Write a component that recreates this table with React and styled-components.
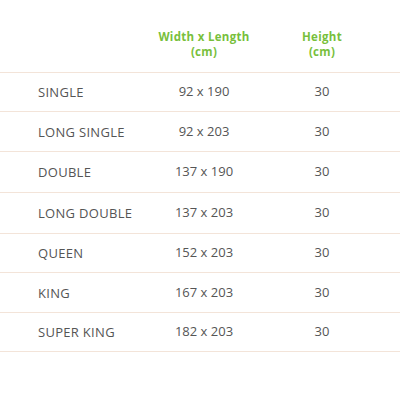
import React from 'react'
import styled, { createGlobalStyle } from 'styled-components'

const GlobalStyle = createGlobalStyle`
    body {
        margin: 0;
        background: #ffffff;
        font-family: "Open Sans", "DejaVu Sans", sans-serif;
    }
`

const Table = styled.div`
    width: 400px;
    height: 400px;
    background: #ffffff;
`

const Row = styled.div`
    display: grid;
    grid-template-columns: 144px 120px 116px 20px;
    align-items: center;
    height: ${({ h }) => h}px;
    border-bottom: 1px solid #f3e4d9;
    box-sizing: border-box;
`

const HeadRow = styled(Row)`
    align-items: start;
    padding-top: 29px;
`

const HeadCell = styled.div`
    text-align: center;
    color: #78bf3c;
    font-weight: 700;
    font-size: 11.5px;
    line-height: 15px;
    letter-spacing: 0.3px;
`

const Label = styled.div`
    padding-left: 38px;
    color: #555555;
    font-size: 13px;
    letter-spacing: 0.3px;
`

const Cell = styled.div`
    text-align: center;
    color: #555555;
    font-size: 13px;
    margin-top: -2px;
`

const sizes = [
    { name: 'SINGLE', dims: '92 x 190', h: 39 },
    { name: 'LONG SINGLE', dims: '92 x 203', h: 40 },
    { name: 'DOUBLE', dims: '137 x 190', h: 41 },
    { name: 'LONG DOUBLE', dims: '137 x 203', h: 41 },
    { name: 'QUEEN', dims: '152 x 203', h: 39 },
    { name: 'KING', dims: '167 x 203', h: 40 },
    { name: 'SUPER KING', dims: '182 x 203', h: 39 },
]

const App = () => {
    return (
        <Table>
            <GlobalStyle />
            <HeadRow h={73}>
                <div />
                <HeadCell>Width x Length<br />(cm)</HeadCell>
                <HeadCell>Height<br />(cm)</HeadCell>
            </HeadRow>
            {sizes.map((s) => (
                <Row key={s.name} h={s.h}>
                    <Label>{s.name}</Label>
                    <Cell>{s.dims}</Cell>
                    <Cell>30</Cell>
                </Row>
            ))}
        </Table>
    )
}

export default App
